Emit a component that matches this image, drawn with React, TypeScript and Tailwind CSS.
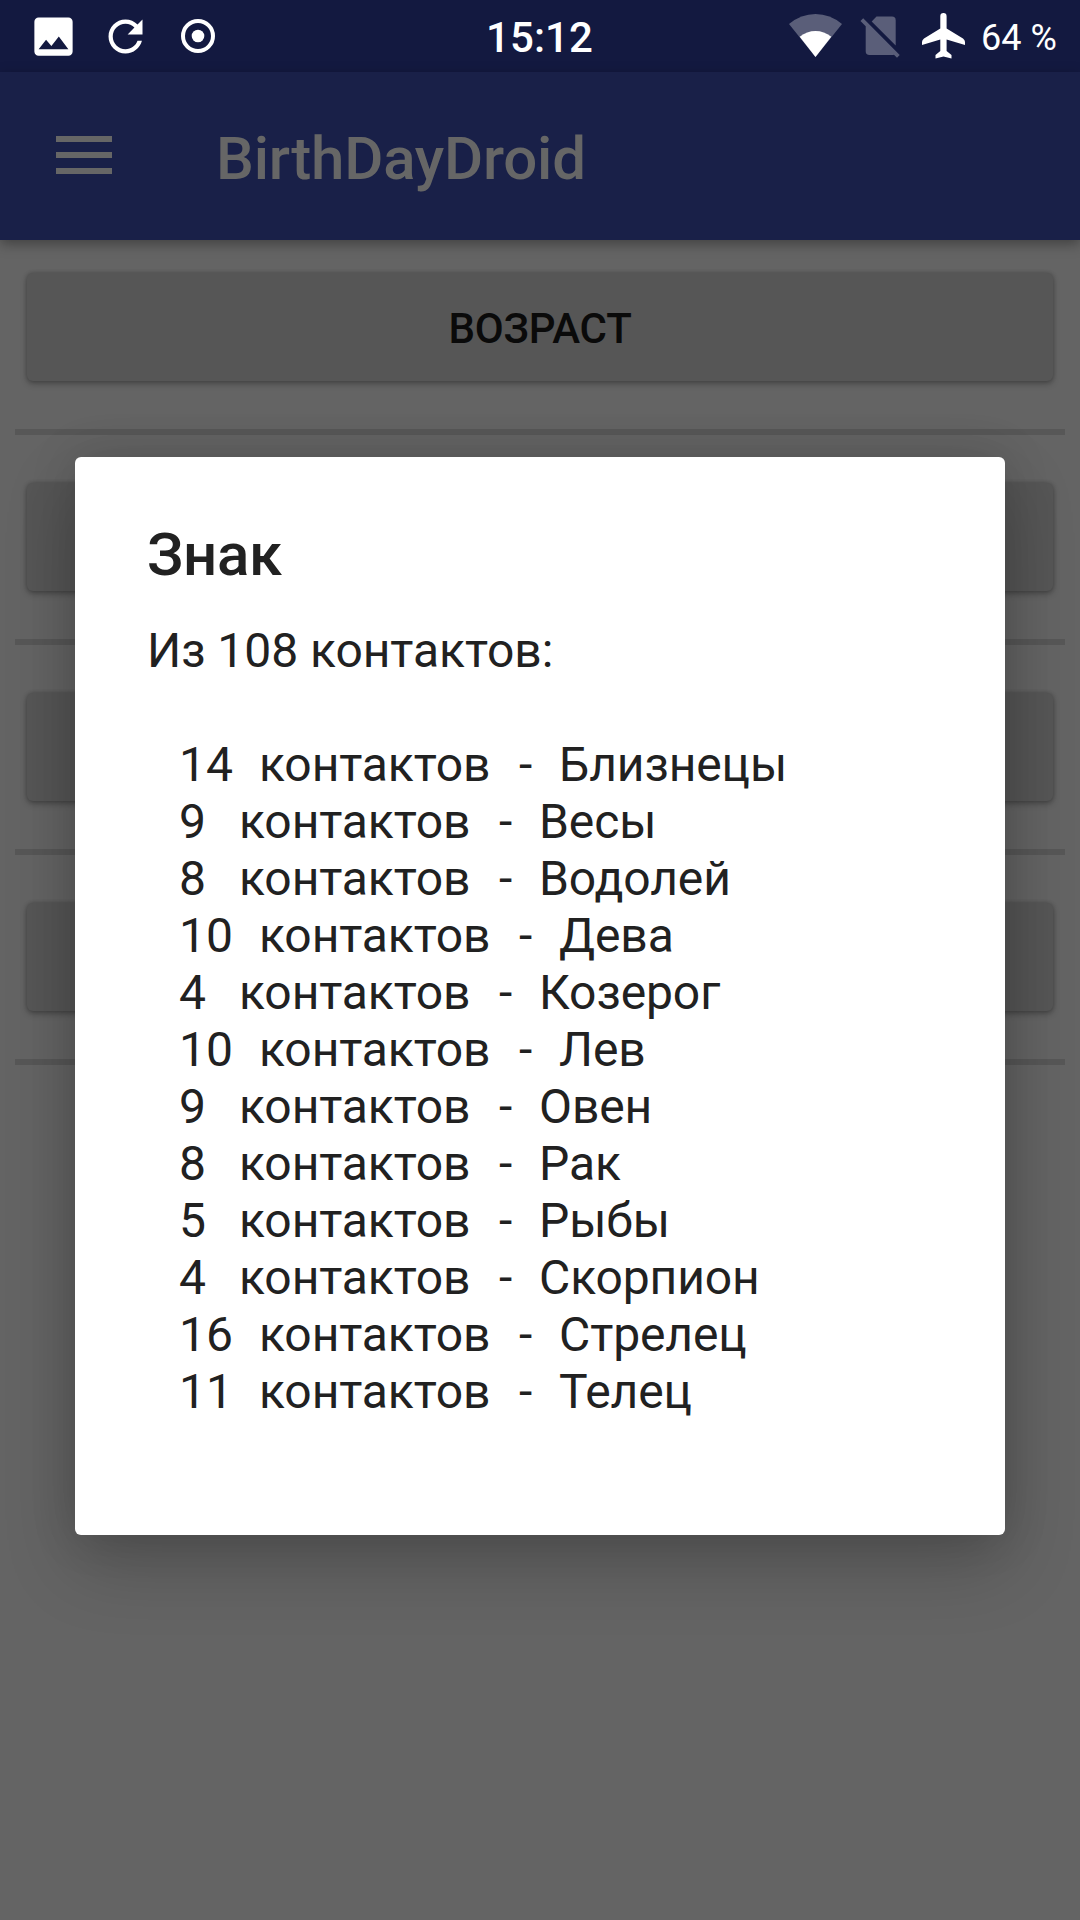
const signs: { count: number; name: string }[] = [
  { count: 14, name: "Близнецы" },
  { count: 9, name: "Весы" },
  { count: 8, name: "Водолей" },
  { count: 10, name: "Дева" },
  { count: 4, name: "Козерог" },
  { count: 10, name: "Лев" },
  { count: 9, name: "Овен" },
  { count: 8, name: "Рак" },
  { count: 5, name: "Рыбы" },
  { count: 4, name: "Скорпион" },
  { count: 16, name: "Стрелец" },
  { count: 11, name: "Телец" },
];

function StatusBar() {
  return (
    <div className="flex h-[72px] items-center bg-[#131940] text-white">
      <svg className="ml-[28px] size-[51px] shrink-0" viewBox="0 0 24 24" fill="currentColor">
        <path d="M21 19V5c0-1.1-.9-2-2-2H5c-1.1 0-2 .9-2 2v14c0 1.1.9 2 2 2h14c1.1 0 2-.9 2-2zM8.5 13.5l2.5 3.01L14.5 12l4.5 6H5l3.5-4.5z" />
      </svg>
      <svg className="ml-[21px] size-[51px] shrink-0" viewBox="0 0 24 24" fill="currentColor">
        <path d="M17.65 6.35C16.2 4.9 14.21 4 12 4c-4.42 0-7.99 3.58-7.99 8s3.57 8 7.99 8c3.73 0 6.84-2.55 7.73-6h-2.08c-.82 2.33-3.04 4-5.65 4-3.31 0-6-2.69-6-6s2.69-6 6-6c1.66 0 3.14.69 4.22 1.78L13 11h7V4l-2.35 2.35z" />
      </svg>
      <svg className="ml-[30px] size-[34px] shrink-0" viewBox="0 0 34 34">
        <circle cx="17" cy="17" r="15" fill="none" stroke="currentColor" strokeWidth="4" />
        <circle cx="17" cy="17" r="6.3" fill="currentColor" />
      </svg>
      <div className="ml-[271px] w-[108px] whitespace-nowrap pt-[3px] text-[42px] font-medium leading-none tracking-[0.1px]">15:12</div>
      <svg className="ml-[195px] h-[72px] w-[53px] shrink-0" viewBox="789 0 53 72">
        <path d="M789 24Q801 14 815.5 14T842 24L815.5 57Z" fill="#fff" fillOpacity=".3" />
        <path d="M799.7 36.7Q807 31 815.5 31T831.3 36.7L815.5 57Z" fill="#fff" />
      </svg>
      <svg className="ml-[18px] h-[72px] w-[40px] shrink-0" viewBox="860 0 40 72" fill="#fff" fillOpacity=".3">
        <path d="M871.700 21.500L876.500 16.500H892Q895.700 16.500 895.700 20.200V45.500Z" />
        <path d="M863.200 18.300L899.700 54.900L897 57.700L894 54.800Q893 55 892 55H869.500Q865.700 55 865.700 51.200V26.300L860.500 21Z" />
      </svg>
      <svg className="ml-[22px] h-[72px] w-[44px] shrink-0" viewBox="922 0 44 72" fill="#fff">
        <path d="M940.300 16.200A3.150 3.150 0 0 1 946.600 16.200V28.500L963 38.500Q965 40 965 42V45L946.600 39.500V51L951.500 55V58.400L943.500 56.500L935.500 58.400V55L940.300 51V39.500L922 45V42Q922 40 924 38.500L940.300 28.500Z" />
      </svg>
      <div className="ml-[15px] whitespace-nowrap pt-[3px] text-[36px] leading-none">64 %</div>
    </div>
  );
}

function AppBar() {
  return (
    <header className="relative flex h-[168px] items-center bg-[#192048] text-[#666] shadow-[0_4px_12px_rgba(0,0,0,0.35)]">
      <div className="ml-14 flex h-[38px] w-14 -translate-y-px flex-col justify-between">
        <span className="h-1.5 bg-[#666]" />
        <span className="h-1.5 bg-[#666]" />
        <span className="h-1.5 bg-[#666]" />
      </div>
      <h1 className="ml-[104px] pt-[5px] text-[60px] font-medium leading-none tracking-[-0.2px]">BirthDayDroid</h1>
    </header>
  );
}

function StatButton({ label }: { label?: string }) {
  return (
    <>
      <button
        type="button"
        className="mx-3 flex h-[108px] items-center justify-center rounded-md bg-[#565656] pt-[3px] text-[42px] font-medium tracking-[-0.2px] text-[#0a0a0a] shadow-[0_3px_6px_rgba(0,0,0,0.25),0_0_4px_rgba(0,0,0,0.22)]"
      >
        {label}
      </button>
      <div className="mt-12 mb-12 h-1.5 bg-[#575757]" />
    </>
  );
}

function SignDialog() {
  return (
    <section
      role="dialog"
      className="absolute left-[75px] top-[457px] h-[1078px] w-[930px] rounded-md bg-white px-[72px] pt-[66px] text-[#212121] shadow-[0_30px_72px_rgba(0,0,0,0.2),0_0_48px_rgba(0,0,0,0.14)]"
    >
      <h2 className="text-[60px] font-medium leading-[64px] tracking-[-0.3px]">Знак</h2>
      <p className="mt-[35px] text-[48px] leading-[57px] tracking-[-0.05px]">Из 108 контактов:</p>
      <ul className="mt-[57px] pl-8 text-[48px] leading-[57px] tracking-[-0.1px]">
        {signs.map(({ count, name }) => (
          <li key={name} className="flex whitespace-nowrap">
            <span className={count > 9 ? "w-20" : "w-[60px]"}>{count}</span>
            <span className="w-[260px]">контактов</span>
            <span className="w-[40px]">-</span>
            <span>{name}</span>
          </li>
        ))}
      </ul>
    </section>
  );
}

export default function App() {
  return (
    <div className="relative h-[1920px] w-[1080px] overflow-hidden bg-[#646464] font-[Roboto,sans-serif]">
      <StatusBar />
      <AppBar />
      <main className="flex flex-col px-[15px] pt-[33px]">
        <StatButton label="ВОЗРАСТ" />
        <StatButton />
        <StatButton />
        <StatButton />
      </main>
      <SignDialog />
    </div>
  );
}
